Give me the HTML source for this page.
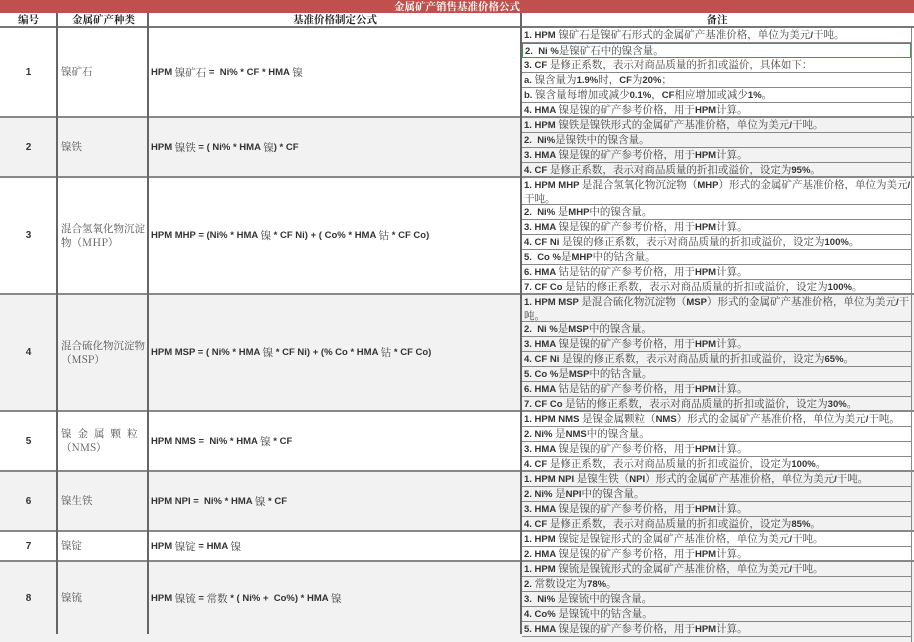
<!DOCTYPE html>
<html><head><meta charset="utf-8"><style>
*{margin:0;padding:0;box-sizing:border-box}
body{width:914px;height:634px;overflow:hidden;background:#fff;position:relative;font-family:"Liberation Sans","Noto Serif CJK SC",serif;font-size:9.5px;color:#222}
.a{position:absolute}
.title{left:0;top:0;width:914px;height:13px;background:#c0504d;color:#fff;font-weight:bold;text-align:center;line-height:13px;font-size:10.5px;font-family:"Noto Serif CJK SC",serif}
.hdr{top:13px;height:15px;line-height:14px;text-align:center;font-weight:bold;font-family:"Noto Serif CJK SC",serif;font-size:10.5px;border-bottom:2px solid #777}
.blk{left:0;width:914px;border-bottom:2px solid #888}
.g{background:#f2f2f2}
.num{position:absolute;left:0;width:57px;top:0;bottom:0;display:flex;align-items:center;justify-content:center;font-weight:bold;font-size:10px;color:#333}
.kind{position:absolute;left:59px;width:89px;top:0;bottom:0;display:flex;align-items:center;padding-left:2px;color:#555;font-family:"Noto Serif CJK SC",serif;font-size:10.5px;line-height:14px}
.form{position:absolute;left:150px;width:370px;top:0;bottom:0;display:flex;align-items:center;padding-left:1px;font-weight:bold;color:#333;font-size:9.5px;white-space:pre}
.form span,.note span{font-weight:normal;font-family:"Noto Serif CJK SC",serif;color:#444;font-size:10.5px}
.notes{position:absolute;left:522px;right:2px;top:0;bottom:0;border-right:1px solid #888}
.note{height:15px;border-bottom:1px solid #888;padding-left:2px;line-height:14px;white-space:nowrap;overflow:hidden;font-weight:bold;color:#333;font-size:9.5px}
.note.t{height:27px;white-space:normal;line-height:13px}
.vl{position:absolute;top:13px;bottom:0;width:2px;background:#666}
</style></head><body>
<div class="a title">金属矿产销售基准价格公式</div>
<div class="a hdr" style="left:0;width:914px"></div>
<div class="a hdr" style="left:0;width:57px">编号</div>
<div class="a hdr" style="left:59px;width:89px">金属矿产种类</div>
<div class="a hdr" style="left:150px;width:370px">基准价格制定公式</div>
<div class="a hdr" style="left:522px;width:390px">备注</div>

<div class="a blk" style="top:28px;height:90px">
<div class="num">1</div><div class="kind">镍矿石</div>
<div class="form">HPM <span>镍矿石</span> =  Ni% * CF * HMA <span>镍</span></div>
<div class="notes">
<div class="note">1. HPM <span>镍矿石是镍矿石形式的金属矿产基准价格，单位为美元</span>/<span>干吨。</span></div>
<div class="note" style="border:1.5px solid #3a9a5a">2.&nbsp; Ni %<span>是镍矿石中的镍含量。</span></div>
<div class="note">3. CF <span>是修正系数，表示对商品质量的折扣或溢价，具体如下：</span></div>
<div class="note">a. <span>镍含量为</span>1.9%<span>时，</span>CF<span>为</span>20%<span>；</span></div>
<div class="note">b. <span>镍含量每增加或减少</span>0.1%<span>，</span>CF<span>相应增加或减少</span>1%<span>。</span></div>
<div class="note" style="border-bottom:none">4. HMA <span>镍是镍的矿产参考价格，用于</span>HPM<span>计算。</span></div>
</div></div>

<div class="a blk g" style="top:118px;height:60px">
<div class="num">2</div><div class="kind">镍铁</div>
<div class="form">HPM <span>镍铁</span> = ( Ni% * HMA <span>镍</span>) * CF</div>
<div class="notes">
<div class="note">1. HPM <span>镍铁是镍铁形式的金属矿产基准价格，单位为美元</span>/<span>干吨。</span></div>
<div class="note">2.&nbsp; Ni%<span>是镍铁中的镍含量。</span></div>
<div class="note">3. HMA <span>镍是镍的矿产参考价格，用于</span>HPM<span>计算。</span></div>
<div class="note" style="border-bottom:none">4. CF <span>是修正系数，表示对商品质量的折扣或溢价，设定为</span>95%<span>。</span></div>
</div></div>

<div class="a blk" style="top:178px;height:117px">
<div class="num">3</div><div class="kind">混合氢氧化物沉淀物（MHP）</div>
<div class="form">HPM MHP = (Ni% * HMA <span>镍</span> * CF Ni) + ( Co% * HMA <span>钴</span> * CF Co)</div>
<div class="notes">
<div class="note t">1. HPM MHP <span>是混合氢氧化物沉淀物（</span>MHP<span>）形式的金属矿产基准价格，单位为美元</span>/<span>干吨。</span></div>
<div class="note">2.&nbsp; Ni% <span>是</span>MHP<span>中的镍含量。</span></div>
<div class="note">3. HMA <span>镍是镍的矿产参考价格，用于</span>HPM<span>计算。</span></div>
<div class="note">4. CF Ni <span>是镍的修正系数，表示对商品质量的折扣或溢价，设定为</span>100%<span>。</span></div>
<div class="note">5.&nbsp; Co %<span>是</span>MHP<span>中的钴含量。</span></div>
<div class="note">6. HMA <span>钴是钴的矿产参考价格，用于</span>HPM<span>计算。</span></div>
<div class="note" style="border-bottom:none">7. CF Co <span>是钴的修正系数，表示对商品质量的折扣或溢价，设定为</span>100%<span>。</span></div>
</div></div>

<div class="a blk g" style="top:295px;height:117px">
<div class="num">4</div><div class="kind">混合硫化物沉淀物（MSP）</div>
<div class="form">HPM MSP = ( Ni% * HMA <span>镍</span> * CF Ni) + (% Co * HMA <span>钴</span> * CF Co)</div>
<div class="notes">
<div class="note t">1. HPM MSP <span>是混合硫化物沉淀物（</span>MSP<span>）形式的金属矿产基准价格，单位为美元</span>/<span>干吨。</span></div>
<div class="note">2.&nbsp; Ni %<span>是</span>MSP<span>中的镍含量。</span></div>
<div class="note">3. HMA <span>镍是镍的矿产参考价格，用于</span>HPM<span>计算。</span></div>
<div class="note">4. CF Ni <span>是镍的修正系数，表示对商品质量的折扣或溢价，设定为</span>65%<span>。</span></div>
<div class="note">5. Co %<span>是</span>MSP<span>中的钴含量。</span></div>
<div class="note">6. HMA <span>钴是钴的矿产参考价格，用于</span>HPM<span>计算。</span></div>
<div class="note" style="border-bottom:none">7. CF Co <span>是钴的修正系数，表示对商品质量的折扣或溢价，设定为</span>30%<span>。</span></div>
</div></div>

<div class="a blk" style="top:412px;height:60px">
<div class="num">5</div><div class="kind"><div style="white-space:nowrap"><span style="letter-spacing:6px">镍金属颗粒</span><br>（NMS）</div></div>
<div class="form">HPM NMS =  Ni% * HMA <span>镍</span> * CF</div>
<div class="notes">
<div class="note">1. HPM NMS <span>是镍金属颗粒（</span>NMS<span>）形式的金属矿产基准价格，单位为美元</span>/<span>干吨。</span></div>
<div class="note">2. Ni% <span>是</span>NMS<span>中的镍含量。</span></div>
<div class="note">3. HMA <span>镍是镍的矿产参考价格，用于</span>HPM<span>计算。</span></div>
<div class="note" style="border-bottom:none">4. CF <span>是修正系数，表示对商品质量的折扣或溢价，设定为</span>100%<span>。</span></div>
</div></div>

<div class="a blk g" style="top:472px;height:60px">
<div class="num">6</div><div class="kind">镍生铁</div>
<div class="form">HPM NPI =  Ni% * HMA <span>镍</span> * CF</div>
<div class="notes">
<div class="note">1. HPM NPI <span>是镍生铁（</span>NPI<span>）形式的金属矿产基准价格，单位为美元</span>/<span>干吨。</span></div>
<div class="note">2. Ni% <span>是</span>NPI<span>中的镍含量。</span></div>
<div class="note">3. HMA <span>镍是镍的矿产参考价格，用于</span>HPM<span>计算。</span></div>
<div class="note" style="border-bottom:none">4. CF <span>是修正系数，表示对商品质量的折扣或溢价，设定为</span>85%<span>。</span></div>
</div></div>

<div class="a blk" style="top:532px;height:30px">
<div class="num">7</div><div class="kind">镍锭</div>
<div class="form">HPM <span>镍锭</span> = HMA <span>镍</span></div>
<div class="notes">
<div class="note">1. HPM <span>镍锭是镍锭形式的金属矿产基准价格，单位为美元</span>/<span>干吨。</span></div>
<div class="note" style="border-bottom:none">2. HMA <span>镍是镍的矿产参考价格，用于</span>HPM<span>计算。</span></div>
</div></div>

<div class="a blk g" style="top:562px;height:80px;border-bottom:none">
<div class="num" style="height:72px">8</div><div class="kind" style="height:72px">镍锍</div>
<div class="form" style="height:72px">HPM <span>镍锍</span> = <span>常数</span> * ( Ni% +  Co%) * HMA <span>镍</span></div>
<div class="notes">
<div class="note">1. HPM <span>镍锍是镍锍形式的金属矿产基准价格，单位为美元</span>/<span>干吨。</span></div>
<div class="note">2. <span>常数设定为</span>78%<span>。</span></div>
<div class="note">3.&nbsp; Ni% <span>是镍锍中的镍含量。</span></div>
<div class="note">4. Co% <span>是镍锍中的钴含量。</span></div>
<div class="note">5. HMA <span>镍是镍的矿产参考价格，用于</span>HPM<span>计算。</span></div>
</div></div>

<div class="vl" style="left:56px"></div>
<div class="vl" style="left:147px"></div>
<div class="vl" style="left:520px"></div>
</body></html>
